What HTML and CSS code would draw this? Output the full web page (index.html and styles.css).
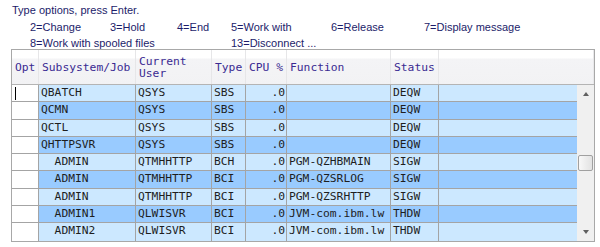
FILE: index.html
```html
<!DOCTYPE html>
<html>
<head>
<meta charset="utf-8">
<link rel="stylesheet" href="styles.css">
</head>
<body>
<div class="opts">
  <div class="line">Type options, press Enter.</div>
  <div class="line ind">
    <span class="w80">2=Change</span><span class="w67">3=Hold</span><span class="w54">4=End</span><span class="w100">5=Work with</span><span class="w93">6=Release</span><span>7=Display message</span>
  </div>
  <div class="line ind">
    <span class="w201">8=Work with spooled files</span><span>13=Disconnect ...</span>
  </div>
</div>
<div class="table">
  <div class="head">
    <div class="hc">Opt</div>
    <div class="hc">Subsystem/Job</div>
    <div class="hc">Current<br>User</div>
    <div class="hc">Type</div>
    <div class="hc">CPU %</div>
    <div class="hc">Function</div>
    <div class="hc">Status</div>
    <div class="hc last"></div>
  </div>
  <div class="body">
    <div class="rows">
      <div class="row lt"><div class="c opt"><span class="cursor"></span></div><div class="c">QBATCH</div><div class="c">QSYS</div><div class="c">SBS</div><div class="c num">.0</div><div class="c"></div><div class="c">DEQW</div><div class="c end"></div></div>
      <div class="row dk"><div class="c opt"></div><div class="c">QCMN</div><div class="c">QSYS</div><div class="c">SBS</div><div class="c num">.0</div><div class="c"></div><div class="c">DEQW</div><div class="c end"></div></div>
      <div class="row lt"><div class="c opt"></div><div class="c">QCTL</div><div class="c">QSYS</div><div class="c">SBS</div><div class="c num">.0</div><div class="c"></div><div class="c">DEQW</div><div class="c end"></div></div>
      <div class="row dk"><div class="c opt"></div><div class="c">QHTTPSVR</div><div class="c">QSYS</div><div class="c">SBS</div><div class="c num">.0</div><div class="c"></div><div class="c">DEQW</div><div class="c end"></div></div>
      <div class="row lt"><div class="c opt"></div><div class="c">  ADMIN</div><div class="c">QTMHHTTP</div><div class="c">BCH</div><div class="c num">.0</div><div class="c">PGM-QZHBMAIN</div><div class="c">SIGW</div><div class="c end"></div></div>
      <div class="row dk"><div class="c opt"></div><div class="c">  ADMIN</div><div class="c">QTMHHTTP</div><div class="c">BCI</div><div class="c num">.0</div><div class="c">PGM-QZSRLOG</div><div class="c">SIGW</div><div class="c end"></div></div>
      <div class="row lt"><div class="c opt"></div><div class="c">  ADMIN</div><div class="c">QTMHHTTP</div><div class="c">BCI</div><div class="c num">.0</div><div class="c">PGM-QZSRHTTP</div><div class="c">SIGW</div><div class="c end"></div></div>
      <div class="row dk"><div class="c opt"></div><div class="c">  ADMIN1</div><div class="c">QLWISVR</div><div class="c">BCI</div><div class="c num">.0</div><div class="c">JVM-com.ibm.lw</div><div class="c">THDW</div><div class="c end"></div></div>
      <div class="row lt"><div class="c opt"></div><div class="c">  ADMIN2</div><div class="c">QLWISVR</div><div class="c">BCI</div><div class="c num">.0</div><div class="c">JVM-com.ibm.lw</div><div class="c">THDW</div><div class="c end"></div></div>
    </div>
    <div class="scroll">
      <div class="arrow up"></div>
      <div class="track"><div class="thumb"></div></div>
      <div class="arrow down"></div>
    </div>
  </div>
</div>
</body>
</html>
```
FILE: styles.css
```css
html, body {
  margin: 0;
  padding: 0;
  background: #ffffff;
}
body {
  width: 600px;
  height: 247px;
  overflow: hidden;
}
.opts {
  padding: 2px 0 0 12px;
  font-family: "Liberation Sans", Arial, sans-serif;
  font-size: 11px;
  color: #1c1c6a;
  height: 47px;
}
.line {
  height: 16.5px;
  line-height: 16.5px;
  white-space: nowrap;
  display: flex;
}
.line.ind {
  padding-left: 18px;
}
.line span { display: inline-block; }
.w80 { width: 80px; }
.w67 { width: 67px; }
.w54 { width: 54px; }
.w100 { width: 100px; }
.w93 { width: 93px; }
.w201 { width: 201px; }

.table {
  margin-left: 11px;
  width: 582px;
  border: 1px solid #a8a8a8;
  font-family: "DejaVu Sans Mono", monospace;
  font-size: 11.3px;
}
.head {
  display: grid;
  grid-template-columns: 27px 97px 76px 34px 41px 104px 48px 1fr;
  height: 35px;
  background: linear-gradient(to bottom, #ffffff 0, #ffffff 8px, #f4f4f6 9px, #f2f2f4 100%);
  border-bottom: 1px solid #b4b4b4;
  box-sizing: border-box;
}
.hc {
  display: flex;
  align-items: center;
  padding-left: 3px;
  color: #3a2a92;
  border-right: 1px solid #e6e6e8;
  line-height: 12px;
  padding-top: 1px;
}
.hc.last { border-right: 1px solid #e8e8ea; }
.body {
  display: flex;
  height: 156px;
}
.rows {
  width: 565px;
}
.row {
  display: grid;
  grid-template-columns: 27px 97px 76px 34px 41px 104px 48px 1fr;
  height: 17.3px;
  box-sizing: border-box;
  border-bottom: 1px solid #a4a4a4;
}
.row:last-child { border-bottom: none; }
.row.lt { background: #cce8ff; }
.row.dk { background: #99cbff; }
.c {
  white-space: pre;
  color: #1e1e1e;
  border-right: 1px solid #a4a4a4;
  padding-left: 2px;
  line-height: 16px;
  overflow: hidden;
}
.c.opt {
  background: #ffffff;
  position: relative;
}
.c.num {
  text-align: right;
  padding-right: 1px;
  padding-left: 0;
}
.c.end { border-right: none; }
.cursor {
  position: absolute;
  left: 3px;
  top: 2px;
  width: 1px;
  height: 13px;
  background: #000;
}
.scroll {
  width: 17px;
  background: #f0f0f0;
  display: flex;
  flex-direction: column;
  align-items: center;
}
.arrow {
  width: 0;
  height: 0;
  border-left: 3.5px solid transparent;
  border-right: 3.5px solid transparent;
}
.arrow.up {
  margin-top: 7px;
  border-bottom: 4px solid #606060;
}
.arrow.down {
  margin-bottom: 7px;
  border-top: 4px solid #606060;
}
.track {
  flex: 1;
  width: 100%;
  position: relative;
}
.thumb {
  position: absolute;
  left: 1px;
  top: 59px;
  width: 13px;
  height: 14px;
  border: 1px solid #a0a0a0;
  border-radius: 2px;
  background: linear-gradient(to right, #f8f8f8, #e2e2e2);
}
```
